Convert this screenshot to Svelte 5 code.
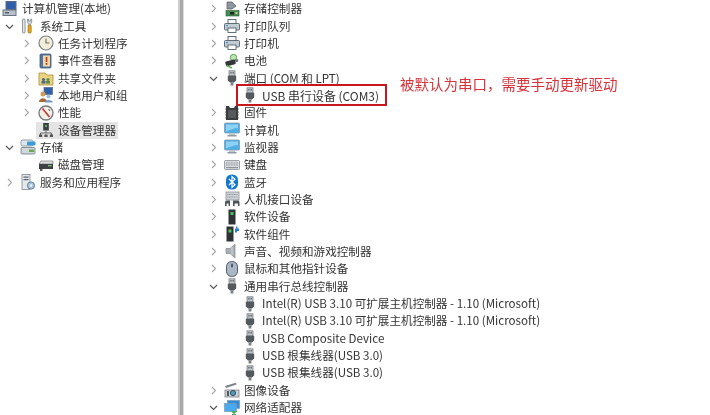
<script>
  const tools = [
    { label: '任务计划程序', icon: 'clock', arrow: 'right' },
    { label: '事件查看器', icon: 'event', arrow: 'right' },
    { label: '共享文件夹', icon: 'share', arrow: 'right' },
    { label: '本地用户和组', icon: 'users', arrow: 'right' },
    { label: '性能', icon: 'perf', arrow: 'right' },
    { label: '设备管理器', icon: 'devmgr', selected: true }
  ];

  const left = [
    { label: '计算机管理(本地)', icon: 'computer', level: 0 },
    { label: '系统工具', icon: 'tools', arrow: 'down', level: 1 },
    ...tools.map((t) => ({ ...t, level: 2 })),
    { label: '存储', icon: 'storage', arrow: 'down', level: 1 },
    { label: '磁盘管理', icon: 'disk', level: 2 },
    { label: '服务和应用程序', icon: 'services', arrow: 'right', level: 1 }
  ];

  const devices = [
    { label: '存储控制器', icon: 'storctl', arrow: 'right' },
    { label: '打印队列', icon: 'printer', arrow: 'right' },
    { label: '打印机', icon: 'printer', arrow: 'right' },
    { label: '电池', icon: 'battery', arrow: 'right' },
    { label: '端口 (COM 和 LPT)', icon: 'usb', arrow: 'down' },
    { label: 'USB 串行设备 (COM3)', icon: 'usb', child: true, boxed: true },
    { label: '固件', icon: 'chip', arrow: 'right' },
    { label: '计算机', icon: 'monitor', arrow: 'right' },
    { label: '监视器', icon: 'monitor', arrow: 'right' },
    { label: '键盘', icon: 'keyboard', arrow: 'right' },
    { label: '蓝牙', icon: 'bluetooth', arrow: 'right' },
    { label: '人机接口设备', icon: 'hid', arrow: 'right' },
    { label: '软件设备', icon: 'soft', arrow: 'right' },
    { label: '软件组件', icon: 'softpart', arrow: 'right' },
    { label: '声音、视频和游戏控制器', icon: 'sound', arrow: 'right' },
    { label: '鼠标和其他指针设备', icon: 'mouse', arrow: 'right' },
    { label: '通用串行总线控制器', icon: 'usb', arrow: 'down' },
    { label: 'Intel(R) USB 3.10 可扩展主机控制器 - 1.10 (Microsoft)', icon: 'usb', child: true },
    { label: 'Intel(R) USB 3.10 可扩展主机控制器 - 1.10 (Microsoft)', icon: 'usb', child: true },
    { label: 'USB Composite Device', icon: 'usb', child: true },
    { label: 'USB 根集线器(USB 3.0)', icon: 'usb', child: true },
    { label: 'USB 根集线器(USB 3.0)', icon: 'usb', child: true },
    { label: '图像设备', icon: 'camera', arrow: 'right' },
    { label: '网络适配器', icon: 'network', arrow: 'down' }
  ];
</script>

{#snippet arrow(dir)}
  <svg class="arrow" viewBox="0 0 9 9" width="9" height="9">
    {#if dir === 'right'}
      <path d="M3 1 L6.5 4.5 L3 8" fill="none" stroke="#a6a6a6" stroke-width="1.1" />
    {:else if dir === 'down'}
      <path d="M1 3 L4.5 6.5 L8 3" fill="none" stroke="#555" stroke-width="1.1" />
    {/if}
  </svg>
{/snippet}

{#snippet icon(name)}
  <svg class="icon" viewBox="0 0 16 16" width="16" height="16">
    {#if name === 'computer'}
      <rect x="4" y="0.5" width="10" height="8" fill="#2f5fa8" stroke="#5a6a80" />
      <rect x="1" y="9" width="13" height="5.5" fill="#b8c2cc" stroke="#6a7480" />
      <rect x="3" y="11" width="4" height="1.5" fill="#56616e" />
    {:else if name === 'tools'}
      <rect x="2.5" y="1" width="2.6" height="14" rx="1" fill="#e4e7ea" stroke="#67707a" stroke-width="0.7" />
      <rect x="8" y="7" width="3.2" height="8" rx="1" fill="#eba718" stroke="#8a6510" stroke-width="0.6" />
      <path d="M7.5 1 v3 l1.5 3 h1.2 l1.5 -3 v-3 l-1 0 v2 h-2.2 v-2 z" fill="#d4dade" stroke="#67707a" stroke-width="0.6" />
    {:else if name === 'clock'}
      <circle cx="8" cy="8" r="7" fill="#f2eeda" stroke="#7a8088" stroke-width="1.2" />
      <path d="M8 3.5 V8 H11.5" fill="none" stroke="#6a6a5a" stroke-width="1.1" />
    {:else if name === 'event'}
      <rect x="2" y="1" width="11" height="14" rx="1" fill="#4f76ad" stroke="#46566e" stroke-width="0.8" />
      <rect x="5" y="2.5" width="7" height="11" fill="#efd9a2" />
      <rect x="7.7" y="4" width="1.7" height="5" fill="#c63a2f" />
      <rect x="7.7" y="10" width="1.7" height="1.8" fill="#c63a2f" />
    {:else if name === 'share'}
      <path d="M1 3 H7 L8.5 5 H15 V15 H1 Z" fill="#ecd27e" stroke="#a98e3c" stroke-width="0.8" />
      <circle cx="5.5" cy="9.5" r="1.6" fill="#44688f" />
      <circle cx="10" cy="9.5" r="1.6" fill="#5e8a46" />
      <rect x="3.5" y="11" width="4" height="2.6" fill="#44688f" />
      <rect x="8" y="11" width="4" height="2.6" fill="#5e8a46" />
    {:else if name === 'users'}
      <rect x="6" y="0.5" width="8.5" height="7" fill="#2f5fa8" stroke="#60708a" stroke-width="0.8" />
      <circle cx="5" cy="7" r="2.5" fill="#cf9a5b" />
      <path d="M1 15 C1 10 9 10 9 15 Z" fill="#a8693a" />
      <circle cx="10.5" cy="9.5" r="2.1" fill="#9cc0dd" />
      <path d="M6.5 15.5 C7 12 14.5 12 15 15.5 Z" fill="#6f9dc4" />
    {:else if name === 'perf'}
      <circle cx="8" cy="8" r="7" fill="#f4f0e8" stroke="#71767c" stroke-width="1.3" />
      <path d="M4.5 3.5 L11.5 12" stroke="#c0392f" stroke-width="1.6" />
      <path d="M10.5 4 L12 6" stroke="#565656" stroke-width="1" />
    {:else if name === 'devmgr'}
      <rect x="5.2" y="1" width="5.6" height="7.5" fill="#3a3f44" />
      <rect x="7" y="3" width="2" height="2" fill="#56b05c" />
      <path d="M8 8.5 V11 M2.5 13 V11 H13.5 V13" fill="none" stroke="#666" />
      <rect x="1" y="12.5" width="3.2" height="2.5" fill="#555" />
      <rect x="6.4" y="12.5" width="3.2" height="2.5" fill="#555" />
      <rect x="11.8" y="12.5" width="3.2" height="2.5" fill="#555" />
    {:else if name === 'storage'}
      <rect x="1" y="1" width="12" height="6" rx="1.5" fill="#dfe5ea" stroke="#7d8790" stroke-width="0.8" />
      <rect x="7" y="2.5" width="8.5" height="4" rx="1" fill="#3d9bd6" />
      <rect x="1" y="8.5" width="14" height="6.5" rx="1" fill="#cfd6dc" stroke="#6f7a84" stroke-width="0.8" />
      <rect x="9" y="10.5" width="5" height="2.5" fill="#6aa84f" />
    {:else if name === 'disk'}
      <path d="M3 4 H15 V7 H1 Z" fill="#dcdfe2" stroke="#666" stroke-width="0.6" />
      <rect x="1" y="7" width="14" height="5" fill="#3d4145" />
      <rect x="10" y="8" width="3.5" height="1.3" fill="#7fc06a" />
      <rect x="2" y="12" width="2.5" height="2" fill="#5a5a5a" />
    {:else if name === 'services'}
      <rect x="2" y="0.5" width="8" height="15" fill="#e4e8ec" stroke="#7d8790" stroke-width="0.8" />
      <rect x="3.5" y="2.5" width="5" height="1.2" fill="#56616e" />
      <rect x="3.5" y="5" width="5" height="1.2" fill="#56616e" />
      <circle cx="11" cy="11.5" r="3.6" fill="#a9c4da" stroke="#587a96" stroke-width="0.9" />
      <circle cx="11" cy="11.5" r="1.2" fill="#f4f6f8" />
    {:else if name === 'storctl'}
      <path d="M3 1 H8 L12 5 L8 8 H3 Z" fill="#8f979e" stroke="#4d5358" stroke-width="0.7" />
      <rect x="2" y="9.5" width="13" height="5.5" fill="#3f8f50" stroke="#33563b" stroke-width="0.6" />
      <rect x="6" y="11" width="4" height="2.5" fill="#222" />
      <rect x="11.5" y="11" width="2" height="2" fill="#d9d07a" />
    {:else if name === 'printer'}
      <rect x="4" y="1.5" width="8" height="4.5" fill="#f6f6f6" stroke="#54626e" stroke-width="0.9" />
      <rect x="0.5" y="5.5" width="15" height="6.5" rx="1" fill="#c3cbd2" stroke="#54626e" stroke-width="0.9" />
      <rect x="4" y="10" width="8" height="4.5" fill="#fff" stroke="#54626e" stroke-width="0.9" />
      <rect x="2" y="7" width="2" height="1.2" fill="#3d9bd6" />
    {:else if name === 'battery'}
      <circle cx="9.5" cy="4.5" r="3.2" fill="#bfe6b0" stroke="#4f9a4a" stroke-width="0.9" />
      <rect x="1.5" y="7.5" width="10" height="5" rx="1" fill="#33373b" transform="rotate(-14 6 10)" />
      <rect x="11.5" y="8" width="3" height="2.5" fill="#6a6e72" transform="rotate(-14 6 10)" />
      <path d="M2.5 12.5 L8 15" stroke="#63b04f" stroke-width="1.4" />
    {:else if name === 'usb'}
      <rect x="5" y="0.8" width="6" height="5" fill="#bfc4c8" stroke="#6d7277" stroke-width="0.7" />
      <rect x="6.4" y="2" width="1.1" height="1.5" fill="#50555a" />
      <rect x="8.6" y="2" width="1.1" height="1.5" fill="#50555a" />
      <path d="M3.8 5.8 H12.2 V10.5 L10 12.5 H6 L3.8 10.5 Z" fill="#54595e" />
      <rect x="6.6" y="12.5" width="2.8" height="3" fill="#777c80" />
    {:else if name === 'chip'}
      <path d="M2 1 H5 L6 3 H10 L11 1 H14 V15 H2 Z" fill="#3a3d40" />
      <rect x="4" y="5" width="8" height="8" fill="#55595c" />
      <path d="M2 4 H1 M2 7 H1 M2 10 H1 M2 13 H1 M14 4 H15 M14 7 H15 M14 10 H15 M14 13 H15" stroke="#777" />
    {:else if name === 'monitor'}
      <rect x="0.5" y="1" width="15" height="10" rx="1" fill="#4fb0e6" stroke="#7f99ad" stroke-width="0.8" />
      <path d="M2 2.5 H14 V6 C10 6 6 8 2 9.5 Z" fill="#8ed2f3" />
      <rect x="5" y="11" width="6" height="2" fill="#bcc7d0" />
      <rect x="3.5" y="13" width="9" height="1.5" fill="#8d99a3" />
    {:else if name === 'keyboard'}
      <rect x="0.5" y="3.5" width="15" height="9" rx="1" fill="#d7dbde" stroke="#8a9096" stroke-width="0.8" />
      <path d="M2 6 H14 M2 8 H14" stroke="#8d9399" stroke-width="1" stroke-dasharray="1 0.6" />
      <rect x="2" y="10" width="12" height="1.2" fill="#8d9399" />
    {:else if name === 'bluetooth'}
      <rect x="2" y="0.5" width="12" height="15" rx="5.5" fill="#1178d4" />
      <path d="M5 5 L11 10.8 L8 13.5 V2.5 L11 5.2 L5 11" fill="none" stroke="#fff" stroke-width="1.2" />
    {:else if name === 'hid'}
      <rect x="2" y="1" width="13" height="8" fill="#cfd4d9" stroke="#7d848a" stroke-width="0.7" />
      <path d="M3.5 3.5 H13.5 M3.5 6 H13.5" stroke="#858b91" stroke-dasharray="1 0.6" />
      <path d="M1 15 V11.5 Q1 9.5 3 9.5 H6 V15 H4.6 V12.5 H2.6 V15 Z" fill="#4d555c" />
      <path d="M9 15 V9.5 H14 Q15.5 9.5 15.5 11.5 V15 H14 V12.5 H10.6 V15 Z" fill="#4d555c" />
    {:else if name === 'soft'}
      <rect x="4.5" y="0.5" width="7" height="15" fill="#2f3336" />
      <rect x="6.5" y="3" width="3" height="3" fill="#47c25f" />
    {:else if name === 'softpart'}
      <rect x="2.5" y="0.5" width="7" height="15" fill="#2f3336" />
      <rect x="4.5" y="3.5" width="3" height="3" fill="#47c25f" />
      <path d="M11 2.5 H15 V5 H13 V6.5 H11 Z" fill="#1f7fd0" />
      <rect x="12" y="0.5" width="1.5" height="2" fill="#1f7fd0" />
    {:else if name === 'sound'}
      <path d="M2 5.5 H6 L11 1 V15 L6 10.5 H2 Z" fill="#a9b0b5" stroke="#81888d" stroke-width="0.7" />
      <path d="M8 4 V12" stroke="#d4d8da" stroke-width="1" />
    {:else if name === 'mouse'}
      <rect x="2.5" y="0.5" width="11" height="15" rx="5.2" fill="#aab7c4" stroke="#4d5a68" stroke-width="1" />
      <rect x="7" y="2.5" width="2" height="4" rx="1" fill="#4d5a68" />
    {:else if name === 'camera'}
      <path d="M1 4 L12 0.8 L12.5 2.5 L2 6 Z" fill="#7b8288" />
      <rect x="1" y="8" width="14" height="7" fill="#cbd1d6" stroke="#6e757b" stroke-width="0.7" />
      <circle cx="9" cy="11" r="2.6" fill="#45a0c8" stroke="#333" stroke-width="0.8" />
      <rect x="3" y="9" width="2" height="5" fill="#555b60" />
    {:else if name === 'network'}
      <rect x="3.5" y="0.5" width="12" height="8" fill="#2e8fe0" stroke="#7c99b0" stroke-width="0.7" />
      <rect x="0.5" y="3.5" width="12" height="8" fill="#4aaaf0" stroke="#7c99b0" stroke-width="0.7" />
      <path d="M6.5 11 L10 14 L13.5 11 Z M8 14 H12 V15.5 H8 Z" fill="#45b04d" />
    {/if}
  </svg>
{/snippet}

<div class="window">
  <aside class="pane tree-left">
    {#each left as row}
      <div class="row lvl-{row.level}">
        {#if row.level > 0}
          <span class="slot">{#if row.arrow}{@render arrow(row.arrow)}{/if}</span>
        {/if}
        <span class="item" class:selected={row.selected}>
          {@render icon(row.icon)}
          <span class="label">{row.label}</span>
        </span>
      </div>
    {/each}
  </aside>
  <div class="divider"></div>
  <main class="pane tree-right">
    {#each devices as row}
      <div class="row" class:child={row.child} class:boxed-row={row.boxed}>
        {#if !row.child}
          <span class="slot">{#if row.arrow}{@render arrow(row.arrow)}{/if}</span>
        {/if}
        <span class="item" class:boxed={row.boxed}>
          {@render icon(row.icon)}
          <span class="label">{row.label}</span>
        </span>
        {#if row.boxed}
          <span class="note">被默认为串口，需要手动更新驱动</span>
        {/if}
      </div>
    {/each}
  </main>
</div>

<style>
  :global(body) {
    margin: 0;
    background: #fff;
  }

  .window {
    width: 710px;
    height: 415px;
    display: flex;
    overflow: hidden;
    background: #fff;
    font-family: 'Noto Sans CJK SC', 'Liberation Sans', sans-serif;
    font-size: 11.6px;
    color: #333;
    filter: blur(0.3px);
  }

  .tree-left {
    width: 178px;
    flex: none;
    padding-left: 1px;
    box-sizing: border-box;
  }

  .divider {
    width: 6px;
    flex: none;
    box-sizing: border-box;
    background: #a9a9a9;
    border-left: 2px solid #cdcdcd;
    border-right: 1.5px solid #dedede;
  }

  .tree-right {
    flex: 1;
    padding-left: 24px;
  }

  .row {
    height: 17.35px;
    display: flex;
    align-items: center;
    white-space: nowrap;
    position: relative;
  }

  .slot {
    width: 11px;
    flex: none;
    display: flex;
    align-items: center;
  }

  .tree-right .slot {
    padding-left: 1px;
    box-sizing: border-box;
  }

  .tree-left .slot {
    width: 18px;
    padding-left: 4px;
    box-sizing: border-box;
  }

  .lvl-2 {
    padding-left: 17px;
  }

  .lvl-2 .item {
    padding-left: 2px;
  }

  .item {
    display: flex;
    align-items: center;
    gap: 4px;
    height: 17px;
    padding: 0 2px 0 1px;
  }

  .selected {
    background: #e4e4e4;
  }

  .tree-right .slot + .item {
    margin-left: 4px;
  }

  .child {
    padding-left: 33px;
  }

  .child .item {
    gap: 4px;
  }

  .boxed-row {
    padding-left: 30px;
  }

  .boxed {
    height: 18px;
    outline: 2px solid #c8161d;
    padding: 0 6px 0 4px;
    font-size: 11.95px;
  }

  .note {
    position: absolute;
    left: 192px;
    top: -13px;
    font-size: 14.5px;
    line-height: 20px;
    color: #d8323a;
  }

  .icon {
    flex: none;
    display: block;
  }

  .arrow {
    display: block;
  }

  .label {
    line-height: 17px;
  }
</style>
